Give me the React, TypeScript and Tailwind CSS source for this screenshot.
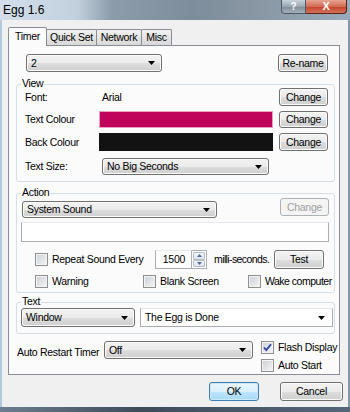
import type { ReactNode } from 'react';

const btnFace = 'bg-[linear-gradient(#f2f2f2_0%,#ebebeb_50%,#dddddd_51%,#cfcfcf_100%)] shadow-[inset_0_0_0_1px_#fbfbfb]';

function Button({ children, className = '', disabled = false, primary = false }: { children: ReactNode; className?: string; disabled?: boolean; primary?: boolean }) {
  if (disabled) {
    return (
      <div className={`flex items-center justify-center rounded-[3px] border border-[#adb2b5] bg-[#f4f4f4] text-[#a0a0a0] ${className}`}>{children}</div>
    );
  }
  if (primary) {
    return (
      <div className={`flex items-center justify-center rounded-[3px] border border-[#3c7fb1] bg-[linear-gradient(#eaf6fd_0%,#d9f0fc_50%,#bee6fd_51%,#a7d9f5_100%)] shadow-[inset_0_0_0_1px_#cde8f7] ${className}`}>{children}</div>
    );
  }
  return <div className={`flex items-center justify-center rounded-[3px] border border-[#707070] ${btnFace} ${className}`}>{children}</div>;
}

function Arrow() {
  return (
    <svg width="7" height="4" viewBox="0 0 7 4" className="shrink-0">
      <path d="M0 0h7L3.5 4z" fill="#000" />
    </svg>
  );
}

function Combo({ value, className = '' }: { value: string; className?: string }) {
  return (
    <div className={`flex shrink-0 items-center justify-between rounded-[3px] border border-[#707070] pl-[4px] pr-[6px] ${btnFace} ${className}`}>
      <span>{value}</span>
      <Arrow />
    </div>
  );
}

function EditCombo({ value, className = '' }: { value: string; className?: string }) {
  return (
    <div className={`flex shrink-0 items-center justify-between border border-[#abadb3] border-t-[#e3e9ef] bg-white pl-[4px] pr-[7px] ${className}`}>
      <span>{value}</span>
      <Arrow />
    </div>
  );
}

function Check({ label, checked = false, className = '', labelClass = '' }: { label: string; checked?: boolean; className?: string; labelClass?: string }) {
  return (
    <div className={`flex shrink-0 items-center gap-[4px] ${className}`}>
      <div className="flex h-[13px] w-[13px] shrink-0 items-center justify-center border border-[#8e8f8f] bg-[linear-gradient(135deg,#cbcfd5,#f6f6f6)] shadow-[inset_0_0_0_1px_#f4f4f4]">
        {checked && (
          <svg width="9" height="9" viewBox="0 0 9 9">
            <path d="M1 4.5l2.3 2.5L8 1.2" fill="none" stroke="#2b3fa8" strokeWidth="1.8" />
          </svg>
        )}
      </div>
      <span className={labelClass}>{label}</span>
    </div>
  );
}

function Group({ title, className = '', children }: { title: string; className?: string; children: ReactNode }) {
  return (
    <div className={`relative ml-[7px] mr-[4px] rounded-[3px] border border-[#d5dfe5] ${className}`}>
      <span className="absolute -top-[8px] left-[4px] bg-[#fbfbfb] px-[1px] leading-[13px]">{title}</span>
      {children}
    </div>
  );
}

export default function App() {
  return (
    <div className="flex h-[412px] w-[350px] flex-col overflow-hidden whitespace-nowrap bg-[linear-gradient(90deg,#b4c8dc,#94a9bd_60%,#8397aa)] font-['Liberation_Sans',Arial,sans-serif] text-[10.5px] leading-none tracking-[-0.3px] text-black">
      {/* title bar */}
      <div className="flex h-[20px] shrink-0 items-start justify-between bg-[linear-gradient(90deg,#d3deea_0%,#c2d0de_22%,#8d9caa_32%,#7e8d9b_55%,#8a98a5_75%,#9aabbb_100%)]">
        <span className="pl-[3px] pt-[4px] text-[12px] tracking-normal text-black">Egg 1.6</span>
        <div className="mr-[3px] flex">
          <div className="flex h-[14px] w-[25px] items-center justify-center rounded-bl-[4px] border border-t-0 border-[#4d5a66] bg-[linear-gradient(#c9d2da,#9aa6b1_50%,#7f8c98_51%,#a4b0ba)] text-[10px] font-bold text-white">?</div>
          <div className="flex h-[14px] w-[41px] items-center justify-center rounded-br-[4px] border border-l-0 border-t-0 border-[#5b2219] bg-[linear-gradient(#e8a493,#d26a55_50%,#c4422a_51%,#d4725c)] text-[11px] font-bold text-white">X</div>
        </div>
      </div>

      {/* client area */}
      <div className="mx-[2px] flex h-[387px] flex-col bg-[#f0f0f0]">
        {/* tabs */}
        <div className="flex h-[25px] items-end pl-[6px]">
          <div className="relative z-10 -mb-px flex h-[19px] w-[39px] items-center justify-center rounded-t-[2px] border border-b-0 border-[#898c95] bg-[#fbfbfb] pb-[1px]">Timer</div>
          <div className="-ml-px flex h-[16px] w-[51px] items-center justify-center rounded-t-[2px] border border-b-0 border-[#898c95] bg-[linear-gradient(#f2f2f2,#e3e3e3_50%,#d9d9d9)]">Quick Set</div>
          <div className="-ml-px flex h-[16px] w-[46px] items-center justify-center rounded-t-[2px] border border-b-0 border-[#898c95] bg-[linear-gradient(#f2f2f2,#e3e3e3_50%,#d9d9d9)]">Network</div>
          <div className="-ml-px flex h-[16px] w-[31px] items-center justify-center rounded-t-[2px] border border-b-0 border-[#898c95] bg-[linear-gradient(#f2f2f2,#e3e3e3_50%,#d9d9d9)]">Misc</div>
        </div>

        {/* panel */}
        <div className="ml-[6px] mr-[8px] flex h-[330px] flex-col border border-[#898c95] bg-[#fbfbfb]">
          <div className="flex justify-between pl-[17px] pr-[11px] pt-[8px]">
            <Combo value="2" className="h-[18px] w-[136px]" />
            <Button className="h-[18px] w-[50px]">Re-name</Button>
          </div>

          <Group title="View" className="mt-[12px] h-[98px] pl-[8px] pr-[6px] pt-[3px]">
            <div className="flex h-[18px] items-center">
              <span className="w-[74px]">Font:</span>
              <span className="flex-1 pl-[3px]">Arial</span>
              <Button className="ml-[6px] h-[18px] w-[49px]">Change</Button>
            </div>
            <div className="mt-[5px] flex h-[17px] items-center">
              <span className="w-[74px]">Text Colour</span>
              <div className="h-[17px] flex-1 border border-[#e9a0bf] bg-[#c0045c]" />
              <Button className="ml-[6px] h-[17px] w-[49px]">Change</Button>
            </div>
            <div className="mt-[5px] flex h-[18px] items-center">
              <span className="w-[74px]">Back Colour</span>
              <div className="h-[18px] flex-1 bg-[#121212]" />
              <Button className="ml-[6px] h-[18px] w-[49px]">Change</Button>
            </div>
            <div className="mt-[7px] flex h-[17px] items-center">
              <span className="w-[74px]">Text Size:</span>
              <Combo value="No Big Seconds" className="ml-[3px] h-[17px] w-[167px]" />
            </div>
          </Group>

          <Group title="Action" className="mt-[11px] h-[100px] pl-[4px] pr-[5px] pt-[4px]">
            <div className="flex items-start justify-between">
              <Combo value="System Sound" className="ml-[1px] mt-[3px] h-[17px] w-[195px]" />
              <Button disabled className="h-[18px] w-[49px]">Change</Button>
            </div>
            <div className="mt-[4px] h-[20px] w-[308px] border border-[#abadb3] border-t-[#e3e9ef] bg-white" />
            <div className="mt-[8px] flex h-[19px] items-center pl-[14px]">
              <Check label="Repeat Sound Every" className="w-[120px]" />
              <div className="flex h-[19px] shrink-0">
                <div className="flex w-[37px] items-center justify-end border border-[#abadb3] border-t-[#e3e9ef] bg-white pr-[6px]">1500</div>
                <div className="flex w-[15px] flex-col border border-l-0 border-[#abadb3] bg-white p-[1px]">
                  <div className="flex flex-1 items-center justify-center rounded-[1px] border border-[#b6bcc6] bg-[linear-gradient(#f3f6fa,#dde4ee)]">
                    <svg width="5" height="3" viewBox="0 0 5 3"><path d="M0 3h5L2.5 0z" fill="#4a6a9a" /></svg>
                  </div>
                  <div className="flex flex-1 items-center justify-center rounded-[1px] border border-[#b6bcc6] bg-[linear-gradient(#f3f6fa,#dde4ee)]">
                    <svg width="5" height="3" viewBox="0 0 5 3"><path d="M0 0h5L2.5 3z" fill="#4a6a9a" /></svg>
                  </div>
                </div>
              </div>
              <span className="ml-[7px] tracking-[-0.6px]">milli-seconds.</span>
              <Button className="ml-auto mr-[5px] h-[19px] w-[50px]">Test</Button>
            </div>
            <div className="mt-[6px] flex h-[13px] items-center pl-[14px]">
              <Check label="Warning" className="w-[108px]" />
              <Check label="Blank Screen" className="w-[105px]" />
              <Check label="Wake computer" labelClass="tracking-[-0.5px]" />
            </div>
          </Group>

          <Group title="Text" className="mt-[9px] h-[32px] pl-[4px] pt-[5px]">
            <div className="flex">
              <Combo value="Window" className="h-[19px] w-[114px]" />
              <EditCombo value="The Egg is Done" className="ml-[5px] h-[19px] w-[193px]" />
            </div>
          </Group>

          <div className="mt-[7px] flex pl-[8px]">
            <span className="mt-[6px] w-[87px]">Auto Restart Timer</span>
            <Combo value="Off" className="h-[18px] w-[149px]" />
            <div className="ml-[8px] flex flex-col gap-[5px]">
              <Check label="Flash Display" checked />
              <Check label="Auto Start" />
            </div>
          </div>
        </div>

        {/* dialog buttons */}
        <div className="flex justify-end gap-[21px] pr-[5px] pt-[7px]">
          <Button primary className="h-[19px] w-[50px]">OK</Button>
          <Button className="h-[19px] w-[63px]">Cancel</Button>
        </div>
      </div>
      <div className="flex-1 bg-[linear-gradient(90deg,#6b7d8f,#3e4c5a_40%,#56667a)]" />
    </div>
  );
}
